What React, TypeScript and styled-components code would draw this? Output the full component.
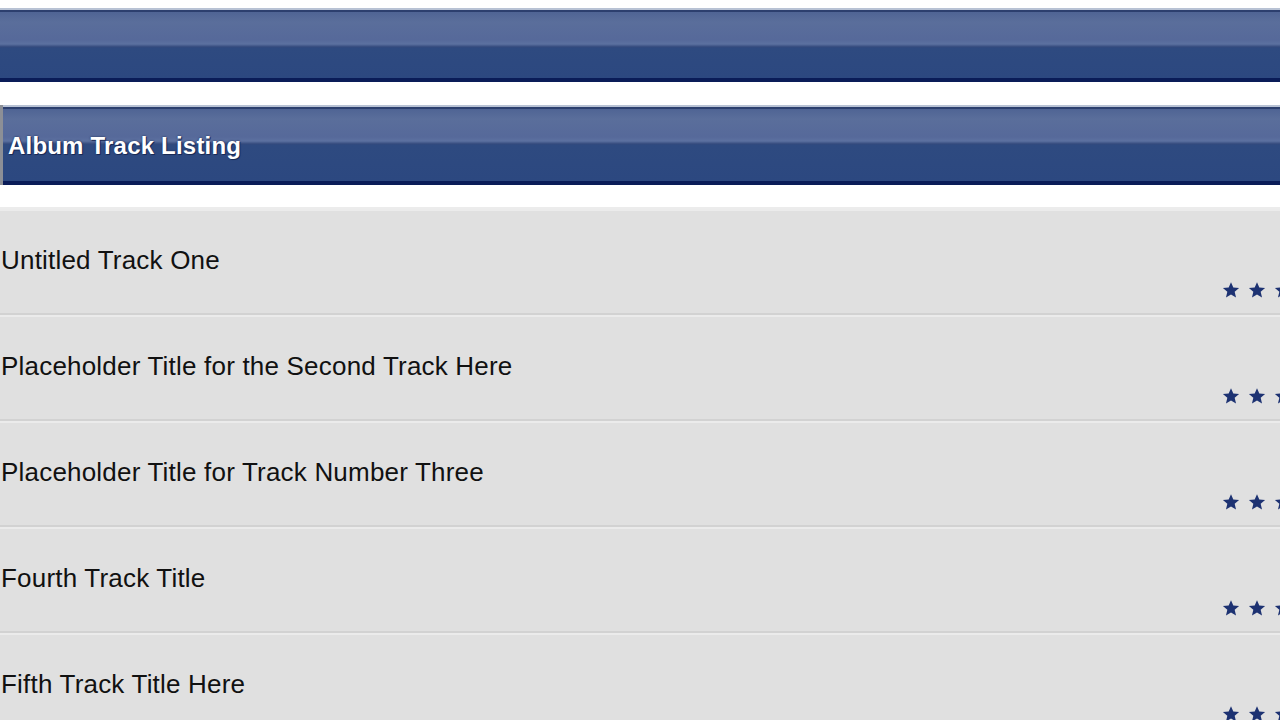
import React from "react";
import styled, { createGlobalStyle } from "styled-components";

const Global = createGlobalStyle`
  html, body { margin: 0; padding: 0; background: #ffffff; overflow: hidden; }
  body { font-family: "Liberation Sans", Arial, sans-serif; }
`;

const Page = styled.div`
  width: 1280px;
  height: 720px;
  overflow: hidden;
  display: flex;
  flex-direction: column;
  background: #ffffff;
  & > * { flex-shrink: 0; }
`;

const barGradient = `linear-gradient(
  to bottom,
  #b8c2d4 0px,
  #b8c2d4 2px,
  #2c3f6e 2px,
  #2c3f6e 4px,
  #4f6494 4px,
  #5a6e9b 14px,
  #56699a 32px,
  #5c71a0 36px,
  #33497c 39px,
  #2e4a80 40px,
  #2c4880 calc(100% - 4px),
  #0a1c58 calc(100% - 4px),
  #0a1c58 100%
)`;

const TopBar = styled.div`
  margin-top: 8px;
  height: 74px;
  background: ${barGradient};
`;

const TitleBar = styled.div`
  margin-top: 23px;
  height: 80px;
  display: flex;
  align-items: center;
  padding-left: 5px;
  border-left: 3px solid #8c8f96;
  background: ${barGradient};
`;

const BarTitle = styled.h1`
  margin: 0;
  padding-top: 2px;
  font-family: "Liberation Sans", Arial, sans-serif;
  font-weight: 700;
  font-size: 24px;
  color: #ffffff;
  letter-spacing: 0.2px;
  text-shadow: 1px 1px 0 #1a2a55, 0 0 2px #1a2a55;
`;

const List = styled.div`
  margin-top: 22px;
  display: flex;
  flex-direction: column;
  border-top: 2px solid #ececec;
`;

const Row = styled.div`
  height: 104px;
  flex-shrink: 0;
  background: #e0e0e0;
  border-bottom: 2px solid #d2d2d2;
  box-shadow: inset 0 2px 0 #ebebeb;
  display: flex;
  flex-direction: column;
  padding-left: 1px;
`;

const TrackName = styled.div`
  margin-top: 36px;
  font-family: "Liberation Sans", Arial, sans-serif;
  font-size: 26px;
  color: #111111;
  letter-spacing: 0.2px;
  line-height: 30px;
  white-space: nowrap;
`;

const Stars = styled.div`
  align-self: flex-start;
  margin-left: 1221px;
  margin-top: 6px;
  display: flex;
  gap: 8px;
`;

const Star = () => (
  <svg width="18" height="18" viewBox="0 0 24 24">
    <path
      d="M12 1.5l3.1 7.2 7.7.6-5.9 5.1 1.8 7.6L12 17.9 5.3 22l1.8-7.6L1.2 9.3l7.7-.6z"
      fill="#1d3272"
    />
  </svg>
);

const tracks = [
  "Untitled Track One",
  "Placeholder Title for the Second Track Here",
  "Placeholder Title for Track Number Three",
  "Fourth Track Title",
  "Fifth Track Title Here",
];

export default function App() {
  return (
    <Page>
      <Global />
      <TopBar />
      <TitleBar>
        <BarTitle>Album Track Listing</BarTitle>
      </TitleBar>
      <List>
        {tracks.map((t) => (
          <Row key={t}>
            <TrackName>{t}</TrackName>
            <Stars>
              <Star />
              <Star />
              <Star />
            </Stars>
          </Row>
        ))}
      </List>
    </Page>
  );
}
